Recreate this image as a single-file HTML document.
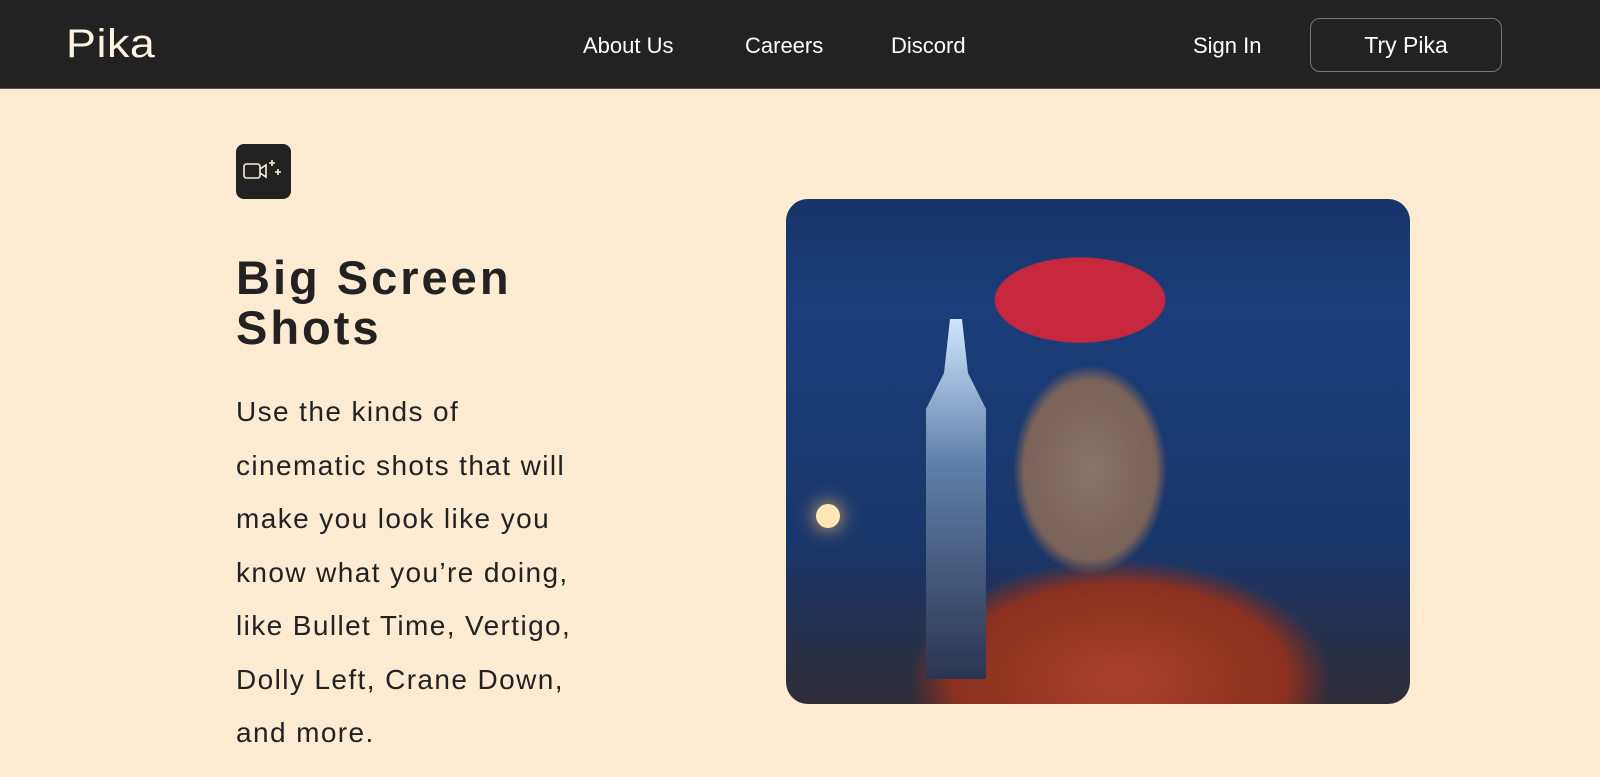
<!DOCTYPE html>
<html><head><meta charset="utf-8"><style>
*{margin:0;padding:0;box-sizing:border-box}
body{width:1600px;height:777px;overflow:hidden;background:#feebd1;font-family:"Liberation Sans",sans-serif;color:#222}
.nav{position:absolute;left:0;top:0;width:1600px;height:89px;background:#222;border-bottom:1px solid #555}
.logo{position:absolute;left:66px;top:22px;font-size:40px;color:#fdf3e3;letter-spacing:0.5px;transform:scaleX(1.12);transform-origin:left}
.nl{position:absolute;top:33px;font-size:22px;color:#fff}
.btn{position:absolute;left:1310px;top:18px;width:192px;height:54px;border:1px solid #777;border-radius:10px;color:#fff;font-size:23px;text-align:center;line-height:52px}
.icon{position:absolute;left:236px;top:144px;width:55px;height:55px;background:#222;border-radius:8px}
h1{position:absolute;left:236px;top:253px;font-size:47px;line-height:50px;font-weight:bold;letter-spacing:3px;color:#222;white-space:nowrap}
p{position:absolute;left:236px;top:385px;font-size:28px;line-height:53.5px;color:#222;letter-spacing:1.4px;white-space:nowrap}
.img{position:absolute;left:786px;top:199px;width:624px;height:505px;border-radius:22px;overflow:hidden;
background:radial-gradient(ellipse 120px 60px at 1080px 300px,#c8283e 0,#c8283e 70%,transparent 72%),
radial-gradient(ellipse 110px 150px at 1090px 470px,#8a7368 0,#7a6258 60%,transparent 70%),
radial-gradient(ellipse 280px 160px at 1120px 680px,#a8402a 0,#8a3020 60%,transparent 75%),
linear-gradient(180deg,#0f2448 0%,#1b3d7a 40%,#19366a 70%,#3a2820 100%);background-attachment:fixed}
</style></head><body>
<div class="nav">
<div class="logo">Pika</div>
<div class="nl" style="left:583px">About Us</div>
<div class="nl" style="left:745px">Careers</div>
<div class="nl" style="left:891px">Discord</div>
<div class="nl" style="left:1193px">Sign In</div>
<div class="btn">Try Pika</div>
</div>
<div class="icon"><svg width="55" height="55" viewBox="0 0 55 55" fill="none" stroke="#fdf0dc" stroke-width="1.6"><rect x="8" y="20" width="16" height="14" rx="2.5"/><path d="M24 25l6-4v12l-6-4"/><path d="M36 16v6M33 19h6M42 25v6M39 28h6"/></svg></div>
<h1>Big Screen<br>Shots</h1>
<p>Use the kinds of<br>cinematic shots that will<br>make you look like you<br>know what you’re doing,<br>like Bullet Time, Vertigo,<br>Dolly Left, Crane Down,<br>and more.</p>
<div class="img">
<div style="position:absolute;left:140px;top:120px;width:60px;height:360px;background:linear-gradient(180deg,#cfe6ff,#6080a8 40%,#2a3550);clip-path:polygon(40% 0,60% 0,70% 15%,100% 25%,100% 100%,0 100%,0 25%,30% 15%)"></div>
<div style="position:absolute;left:30px;top:305px;width:24px;height:24px;border-radius:50%;background:#ffe7b8;box-shadow:0 0 20px #ffc070"></div>
</div>
</body></html>
